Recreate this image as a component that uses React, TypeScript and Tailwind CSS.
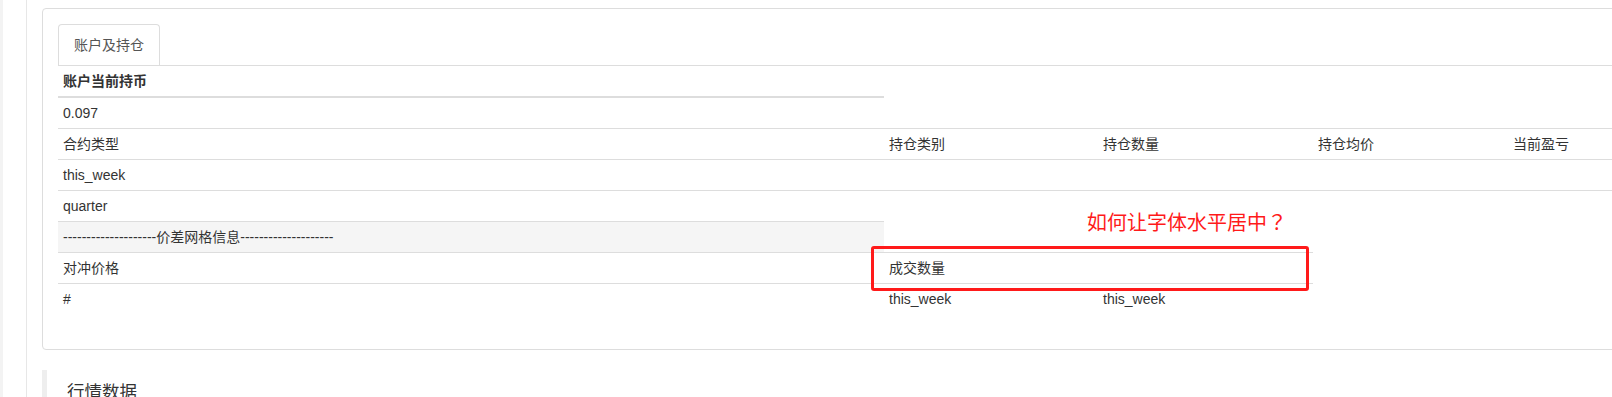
import React from 'react';

const font = { fontFamily: '"Liberation Sans", "Noto Sans CJK SC", sans-serif' };

function Cell({ children, w, bold }: { children?: React.ReactNode; w: string; bold?: boolean }) {
  return (
    <div className={`${w} shrink-0 px-[5px] py-[5px] leading-[20px] ${bold ? 'font-bold' : ''}`}>
      {children}
    </div>
  );
}

export default function App() {
  const positionRows = ['this_week', 'quarter'];

  return (
    <div className="relative w-full h-[397px] overflow-hidden bg-white text-[14px] text-[#333]" style={font}>
      <div className="flex h-full">
        {/* left rail */}
        <div className="w-[3px] shrink-0 bg-[#f3f3f3]" />
        <div className="w-[23px] shrink-0 bg-white" />
        <div className="w-px shrink-0 bg-[#e7e7e7]" />

        {/* content */}
        <div className="pl-[15px] pt-[8px] w-[1700px] shrink-0">
          {/* panel */}
          <div className="border border-[#ddd] rounded-[4px] p-[15px] w-[1680px]">
            {/* tabs */}
            <div className="flex border-b border-[#ddd]">
              <div className="h-[41px] px-[15px] py-[10px] leading-[20px] border border-b-0 border-[#ddd] rounded-t-[4px] text-[#555]">
                账户及持仓
              </div>
            </div>

            {/* account coin */}
            <div className="w-[826px]">
              <div className="flex border-b-2 border-[#ddd]">
                <Cell w="w-[826px]" bold>账户当前持币</Cell>
              </div>
              <div className="flex">
                <Cell w="w-[826px]">0.097</Cell>
              </div>
            </div>

            {/* positions */}
            <div className="w-full">
              <div className="flex border-t border-[#ddd]">
                <Cell w="w-[826px]">合约类型</Cell>
                <Cell w="w-[214px]">持仓类别</Cell>
                <Cell w="w-[215px]">持仓数量</Cell>
                <Cell w="w-[195px]">持仓均价</Cell>
                <Cell w="flex-1">当前盈亏</Cell>
              </div>
              {positionRows.map((r) => (
                <div key={r} className="flex border-t border-[#ddd]">
                  <Cell w="w-[826px]">{r}</Cell>
                  <Cell w="w-[214px]" />
                  <Cell w="w-[215px]" />
                  <Cell w="w-[195px]" />
                  <Cell w="flex-1" />
                </div>
              ))}
            </div>

            {/* grid info */}
            <div className="w-[826px] border-t border-[#ddd] bg-[#f5f5f5]">
              <Cell w="w-[826px]">--------------------价差网格信息--------------------</Cell>
            </div>

            {/* hedge */}
            <div className="w-[1255px] mb-[20px]">
              <div className="flex border-t border-[#ddd]">
                <Cell w="w-[826px]">对冲价格</Cell>
                <Cell w="w-[429px]">成交数量</Cell>
              </div>
              <div className="flex border-t border-[#ddd]">
                <Cell w="w-[826px]">#</Cell>
                <Cell w="w-[214px]">this_week</Cell>
                <Cell w="w-[215px]">this_week</Cell>
              </div>
            </div>
          </div>

          {/* market data */}
          <div className="mt-[20px] border-l-[5px] border-[#eee] px-[20px] py-[10px]">
            <div className="text-[17.5px] leading-[25px]">行情数据</div>
          </div>
        </div>
      </div>

      {/* annotation */}
      <div className="absolute left-[871px] top-[246px] w-[438px] h-[45px] border-[3px] border-[#ff1a1a] rounded-[3px]" />
      <div
        className="absolute left-[1087px] top-[212px] text-[20px] leading-[20px] text-[#ff1a1a] whitespace-nowrap"
        style={{ fontFamily: '"Noto Sans CJK JP", "Noto Sans CJK SC", sans-serif' }}
      >
        如何让字体水平居中？
      </div>
    </div>
  );
}
